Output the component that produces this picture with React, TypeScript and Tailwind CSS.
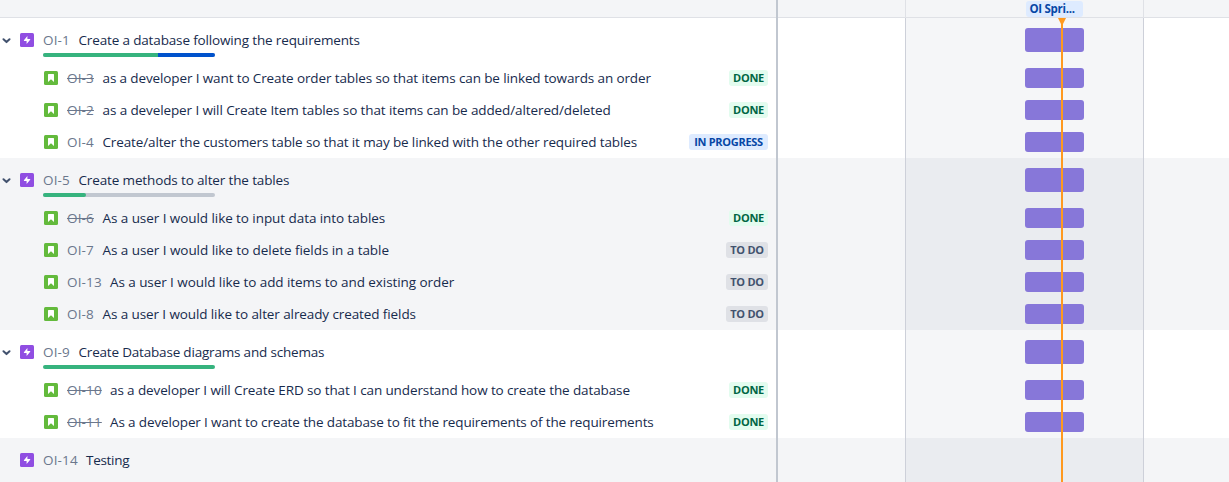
type Status = 'DONE' | 'IN PROGRESS' | 'TO DO';

interface Story {
  id: string;
  title: string;
  status: Status;
  tracking: string;
}

interface Epic {
  id: string;
  title: string;
  tracking: string;
  progress?: string[];
  stories: Story[];
}

const epics: Epic[] = [
  {
    id: 'OI-1',
    title: 'Create a database following the requirements',
    tracking: 'tracking-[-0.15px]',
    progress: ['w-[115px] bg-[#36b37e]', 'w-[57px] bg-[#0052cc]'],
    stories: [
      { id: 'OI-3', title: 'as a developer I want to Create order tables so that items can be linked towards an order', status: 'DONE', tracking: 'tracking-[-0.12px]' },
      { id: 'OI-2', title: 'as a develeper I will Create Item tables so that items can be added/altered/deleted', status: 'DONE', tracking: 'tracking-[-0.105px]' },
      { id: 'OI-4', title: 'Create/alter the customers table so that it may be linked with the other required tables', status: 'IN PROGRESS', tracking: 'tracking-[-0.13px]' },
    ],
  },
  {
    id: 'OI-5',
    title: 'Create methods to alter the tables',
    tracking: 'tracking-[-0.135px]',
    progress: ['w-[43px] rounded-r-full bg-[#36b37e]'],
    stories: [
      { id: 'OI-6', title: 'As a user I would like to input data into tables', status: 'DONE', tracking: 'tracking-[-0.065px]' },
      { id: 'OI-7', title: 'As a user I would like to delete fields in a table', status: 'TO DO', tracking: 'tracking-[-0.055px]' },
      { id: 'OI-13', title: 'As a user I would like to add items to and existing order', status: 'TO DO', tracking: 'tracking-[-0.07px]' },
      { id: 'OI-8', title: 'As a user I would like to alter already created fields', status: 'TO DO', tracking: 'tracking-[-0.1px]' },
    ],
  },
  {
    id: 'OI-9',
    title: 'Create Database diagrams and schemas',
    tracking: 'tracking-[-0.19px]',
    progress: ['w-[172px] bg-[#36b37e]'],
    stories: [
      { id: 'OI-10', title: 'as a developer I will Create ERD so that I can understand how to create the database', status: 'DONE', tracking: 'tracking-[-0.11px]' },
      { id: 'OI-11', title: 'As a developer I want to create the database to fit the requirements of the requirements', status: 'DONE', tracking: 'tracking-[-0.13px]' },
    ],
  },
  { id: 'OI-14', title: 'Testing', tracking: 'tracking-[-0.3px]', stories: [] },
];

const lozenge: Record<Status, string> = {
  DONE: 'w-[39px] bg-[#e3fcef] text-[#006644]',
  'IN PROGRESS': 'w-[79px] bg-[#deebff] text-[#0747a6]',
  'TO DO': 'w-[42px] bg-[#dfe1e6] text-[#42526e]',
};

function EpicIcon() {
  return (
    <svg className="size-[14px] shrink-0" viewBox="0 0 14 14">
      <rect width="14" height="14" rx="1.5" fill="#904ee2" />
      <path d="M7.4 3 3.9 7.2c-.2.4 0 .8.4.8h2.3v3l3.6-4.2c.2-.4 0-.8-.4-.8H7.4z" fill="#fff" />
    </svg>
  );
}

function StoryIcon() {
  return (
    <svg className="size-[14px] shrink-0" viewBox="0 0 14 14">
      <rect width="14" height="14" rx="1.5" fill="#63ba3c" />
      <path d="M4 3.6c0-.4.2-.6.6-.6h4.8c.4 0 .6.2.6.6v7.3L7 8.2l-3 2.7z" fill="#fff" />
    </svg>
  );
}

function Chevron() {
  return (
    <svg className="mt-px h-[6px] w-[9px]" viewBox="0 0 9 6">
      <path d="M1.5 1.3 4.5 4.1 7.5 1.3" fill="none" stroke="#42526e" strokeWidth="2" strokeLinecap="round" strokeLinejoin="round" />
    </svg>
  );
}

function IssueKey({ id, done }: { id: string; done?: boolean }) {
  const width = id.length > 4 ? 'w-[35px]' : 'w-[27.5px]';
  return (
    <span className={`${width} shrink-0 text-[#6b778c]`}>
      <span className={`tracking-[0.15px] ${done ? 'line-through' : ''}`}>{id}</span>
    </span>
  );
}

function Timeline({ bar }: { bar?: string }) {
  return (
    <div className="flex flex-1">
      <div className="w-[127px]" />
      <div className="flex w-[238px] items-center border-l border-[#cdd0d9] bg-[#091e42]/4 pl-[119px]">
        {bar && <div className={`w-[59px] rounded-[3px] bg-[#8777d9] ${bar}`} />}
      </div>
      <div className="flex-1 border-l border-[#cdd0d9]" />
    </div>
  );
}

function EpicRow({ epic }: { epic: Epic }) {
  return (
    <div className="flex h-11">
      <div className="flex w-[778px] border-r-2 border-[#c1c7d0]">
        <div className="flex w-5 items-center pl-[2px]">{epic.stories.length > 0 && <Chevron />}</div>
        <div className="flex items-center">
          <EpicIcon />
        </div>
        <div className="ml-[9px] flex flex-col pt-[12px]">
          <div className="flex h-[20px] items-center gap-2 leading-[20px] whitespace-nowrap">
            <IssueKey id={epic.id} />
            <span className={epic.tracking}>{epic.title}</span>
          </div>
          {epic.progress && (
            <div className="mt-[3px] flex h-1 w-[172px] overflow-hidden rounded-full bg-[#c1c7d0]">
              {epic.progress.map((part) => (
                <div key={part} className={part} />
              ))}
            </div>
          )}
        </div>
      </div>
      <Timeline bar={epic.stories.length > 0 ? 'h-6' : undefined} />
    </div>
  );
}

function StoryRow({ story }: { story: Story }) {
  return (
    <div className="flex h-8">
      <div className="flex w-[778px] items-center border-r-2 border-[#c1c7d0] pr-2 pl-[44px]">
        <StoryIcon />
        <div className="ml-[9px] flex flex-1 items-center gap-2 leading-[20px] whitespace-nowrap">
          <IssueKey id={story.id} done={story.status === 'DONE'} />
          <span className={story.tracking}>{story.title}</span>
        </div>
        <span className={`flex h-4 items-center justify-center rounded-[3px] text-[11px] leading-[16px] font-bold tracking-[-0.3px] whitespace-nowrap ${lozenge[story.status]}`}>
          {story.status}
        </span>
      </div>
      <Timeline bar="h-5" />
    </div>
  );
}

export default function App() {
  return (
    <div className="relative h-[482px] w-[1229px] overflow-hidden bg-white font-['Open_Sans','Noto_Sans',sans-serif] text-[13.5px] text-[#172b4d]">
      <div className="flex h-[18px] bg-[#f4f5f7]">
        <div className="flex w-[778px] border-r-2 border-[#c1c7d0]">
          <div className="flex-1 border-b border-[#dfe1e6]" />
        </div>
        <div className="flex flex-1 border-b border-[#dfe1e6]">
          <div className="w-[127px]" />
          <div className="w-[238px] border-l border-[#dfe1e6] pt-px pl-[120px]">
            <div className="flex h-4 w-[57px] items-center rounded-[3px] bg-[#deebff] pl-[3.5px] text-[11.5px] font-bold tracking-[-0.3px] text-[#0747a6]">
              OI Spri...
            </div>
          </div>
          <div className="flex-1 border-l border-[#dfe1e6]" />
        </div>
      </div>
      {epics.map((epic, i) => (
        <div key={epic.id} className={i % 2 ? 'bg-[#f4f5f7]' : 'bg-white'}>
          <EpicRow epic={epic} />
          {epic.stories.map((story) => (
            <StoryRow key={story.id} story={story} />
          ))}
        </div>
      ))}
      <div className="absolute top-[18px] bottom-0 left-[1058px] flex w-2 flex-col items-center">
        <svg className="h-[6px] w-2" viewBox="0 0 8 6">
          <path d="M0 0h8L5 6H3z" fill="#ff991f" />
        </svg>
        <div className="w-[2px] flex-1 bg-[#ff991f]" />
      </div>
    </div>
  );
}
